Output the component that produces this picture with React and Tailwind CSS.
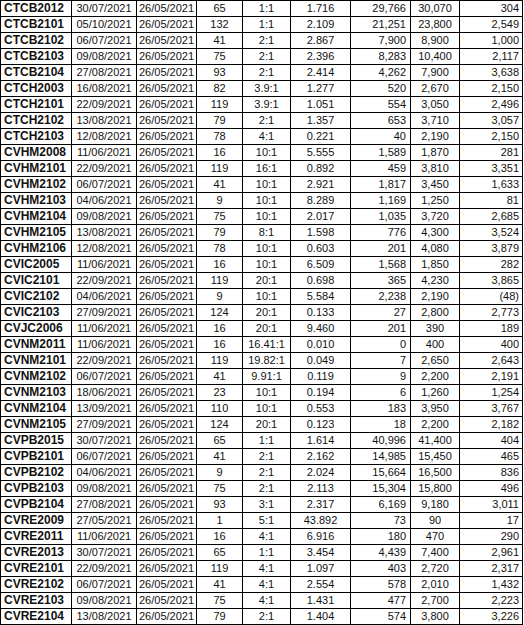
const rows = [
  ["CTCB2012", "30/07/2021", "26/05/2021", "65", "1:1", "1.716", "29,766", "30,070", "304"],
  ["CTCB2101", "05/10/2021", "26/05/2021", "132", "1:1", "2.109", "21,251", "23,800", "2,549"],
  ["CTCB2102", "06/07/2021", "26/05/2021", "41", "2:1", "2.867", "7,900", "8,900", "1,000"],
  ["CTCB2103", "09/08/2021", "26/05/2021", "75", "2:1", "2.396", "8,283", "10,400", "2,117"],
  ["CTCB2104", "27/08/2021", "26/05/2021", "93", "2:1", "2.414", "4,262", "7,900", "3,638"],
  ["CTCH2003", "16/08/2021", "26/05/2021", "82", "3.9:1", "1.277", "520", "2,670", "2,150"],
  ["CTCH2101", "22/09/2021", "26/05/2021", "119", "3.9:1", "1.051", "554", "3,050", "2,496"],
  ["CTCH2102", "13/08/2021", "26/05/2021", "79", "2:1", "1.357", "653", "3,710", "3,057"],
  ["CTCH2103", "12/08/2021", "26/05/2021", "78", "4:1", "0.221", "40", "2,190", "2,150"],
  ["CVHM2008", "11/06/2021", "26/05/2021", "16", "10:1", "5.555", "1,589", "1,870", "281"],
  ["CVHM2101", "22/09/2021", "26/05/2021", "119", "16:1", "0.892", "459", "3,810", "3,351"],
  ["CVHM2102", "06/07/2021", "26/05/2021", "41", "10:1", "2.921", "1,817", "3,450", "1,633"],
  ["CVHM2103", "04/06/2021", "26/05/2021", "9", "10:1", "8.289", "1,169", "1,250", "81"],
  ["CVHM2104", "09/08/2021", "26/05/2021", "75", "10:1", "2.017", "1,035", "3,720", "2,685"],
  ["CVHM2105", "13/08/2021", "26/05/2021", "79", "8:1", "1.598", "776", "4,300", "3,524"],
  ["CVHM2106", "12/08/2021", "26/05/2021", "78", "10:1", "0.603", "201", "4,080", "3,879"],
  ["CVIC2005", "11/06/2021", "26/05/2021", "16", "10:1", "6.509", "1,568", "1,850", "282"],
  ["CVIC2101", "22/09/2021", "26/05/2021", "119", "20:1", "0.698", "365", "4,230", "3,865"],
  ["CVIC2102", "04/06/2021", "26/05/2021", "9", "10:1", "5.584", "2,238", "2,190", "(48)"],
  ["CVIC2103", "27/09/2021", "26/05/2021", "124", "20:1", "0.133", "27", "2,800", "2,773"],
  ["CVJC2006", "11/06/2021", "26/05/2021", "16", "20:1", "9.460", "201", "390", "189"],
  ["CVNM2011", "11/06/2021", "26/05/2021", "16", "16.41:1", "0.010", "0", "400", "400"],
  ["CVNM2101", "22/09/2021", "26/05/2021", "119", "19.82:1", "0.049", "7", "2,650", "2,643"],
  ["CVNM2102", "06/07/2021", "26/05/2021", "41", "9.91:1", "0.119", "9", "2,200", "2,191"],
  ["CVNM2103", "18/06/2021", "26/05/2021", "23", "10:1", "0.194", "6", "1,260", "1,254"],
  ["CVNM2104", "13/09/2021", "26/05/2021", "110", "10:1", "0.553", "183", "3,950", "3,767"],
  ["CVNM2105", "27/09/2021", "26/05/2021", "124", "20:1", "0.123", "18", "2,200", "2,182"],
  ["CVPB2015", "30/07/2021", "26/05/2021", "65", "1:1", "1.614", "40,996", "41,400", "404"],
  ["CVPB2101", "06/07/2021", "26/05/2021", "41", "2:1", "2.162", "14,985", "15,450", "465"],
  ["CVPB2102", "04/06/2021", "26/05/2021", "9", "2:1", "2.024", "15,664", "16,500", "836"],
  ["CVPB2103", "09/08/2021", "26/05/2021", "75", "2:1", "2.113", "15,304", "15,800", "496"],
  ["CVPB2104", "27/08/2021", "26/05/2021", "93", "3:1", "2.317", "6,169", "9,180", "3,011"],
  ["CVRE2009", "27/05/2021", "26/05/2021", "1", "5:1", "43.892", "73", "90", "17"],
  ["CVRE2011", "11/06/2021", "26/05/2021", "16", "4:1", "6.916", "180", "470", "290"],
  ["CVRE2013", "30/07/2021", "26/05/2021", "65", "1:1", "3.454", "4,439", "7,400", "2,961"],
  ["CVRE2101", "22/09/2021", "26/05/2021", "119", "4:1", "1.097", "403", "2,720", "2,317"],
  ["CVRE2102", "06/07/2021", "26/05/2021", "41", "4:1", "2.554", "578", "2,010", "1,432"],
  ["CVRE2103", "09/08/2021", "26/05/2021", "75", "4:1", "1.431", "477", "2,700", "2,223"],
  ["CVRE2104", "13/08/2021", "26/05/2021", "79", "2:1", "1.404", "574", "3,800", "3,226"],
];

// column look: width + alignment per column
const cols = [
  { w: "w-[71px]", cls: "text-left pl-[3px] font-bold text-[12px]" },
  { w: "w-[65px]", cls: "text-center" },
  { w: "w-[60px]", cls: "text-center" },
  { w: "w-[46px]", cls: "text-center" },
  { w: "w-[48px]", cls: "text-center" },
  { w: "w-[60px]", cls: "text-center" },
  { w: "w-[60px]", cls: "text-right pr-[4px]" },
  { w: "w-[49px]", cls: "text-center" },
  { w: "w-[63px]", cls: "text-right pr-[3px]" },
];

export default function App() {
  return (
    <div className="w-[524px] h-[625px] bg-white overflow-hidden" style={{ fontFamily: '"Liberation Sans", Arial, sans-serif' }}>
      <table className="table-fixed border-collapse w-[523px] text-[11px] text-[#111]">
        <colgroup>
          {cols.map((c, i) => (
            <col key={i} className={c.w} />
          ))}
        </colgroup>
        <tbody>
          {rows.map((r) => (
            <tr key={r[0]} className="h-[16px]">
              {r.map((v, i) => (
                <td key={i} className={`border border-black p-0 leading-[15px] whitespace-nowrap ${cols[i].cls}`}>
                  {v}
                </td>
              ))}
            </tr>
          ))}
        </tbody>
      </table>
    </div>
  );
}
